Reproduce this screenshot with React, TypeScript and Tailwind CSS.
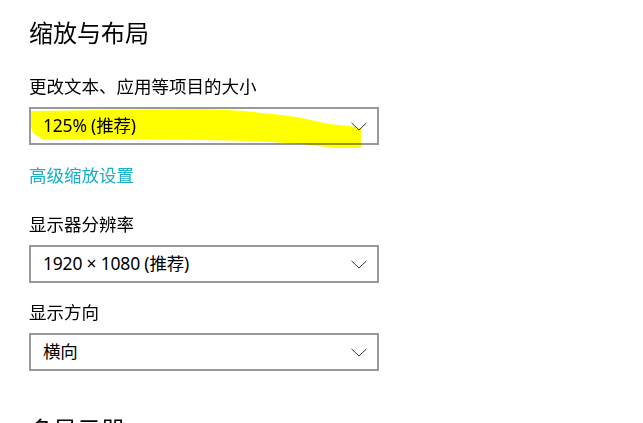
import { ReactNode } from 'react';

const font = { fontFamily: '"Noto Sans", "Noto Sans CJK SC", sans-serif' };

function Chevron() {
  return (
    <svg width="16" height="9" viewBox="0 0 16 9" className="shrink-0">
      <polyline points="0.5,0.8 8,8 15.5,0.8" fill="none" stroke="#3a3a3a" strokeWidth="1" />
    </svg>
  );
}

function Select({ children, highlight }: { children: ReactNode; highlight?: boolean }) {
  return (
    <div className="relative w-[350px] h-[38px] border-2 border-[#999999] bg-white flex items-center justify-between pl-[12px] pr-[10px]">
      <span className="text-[17.5px] text-black leading-none tracking-[-0.2px]">{children}</span>
      <Chevron />
      {highlight && (
        // marker scribble drawn over the first box
        <svg
          className="absolute left-[-29px] top-[-107px] pointer-events-none mix-blend-multiply"
          width="400"
          height="160"
          viewBox="0 0 400 160"
        >
          <polygon
            fill="#ffff00"
            points="30,109 100,108 200,107 225,108 243,109 260,111 280,113 300,116 327,122 347,124 359,126 359,146 333,146 300,142 250,139 200,138 100,137 40,137 31,131 29,125 29,109"
          />
        </svg>
      )}
    </div>
  );
}

export default function App() {
  return (
    <div className="w-[643px] h-[423px] overflow-hidden bg-white pl-[29px] pt-[17px]" style={font}>
      <h1 className="text-[24px] leading-[32px] text-black">缩放与布局</h1>

      <p className="mt-[25px] mb-[9px] text-[17.5px] leading-[24px] text-black">更改文本、应用等项目的大小</p>
      <Select highlight>125% (推荐)</Select>

      <p className="mt-[18px] text-[17.5px] leading-[24px] text-[#1ab0c6]">高级缩放设置</p>

      <p className="mt-[25px] mb-[9px] text-[17.5px] leading-[24px] text-black">显示器分辨率</p>
      <Select>1920 × 1080 (推荐)</Select>

      <p className="mt-[17px] mb-[9px] text-[17.5px] leading-[24px] text-black">显示方向</p>
      <Select>横向</Select>

      <h2 className="mt-[43px] text-[24px] leading-[32px] text-black">多显示器</h2>
    </div>
  );
}
